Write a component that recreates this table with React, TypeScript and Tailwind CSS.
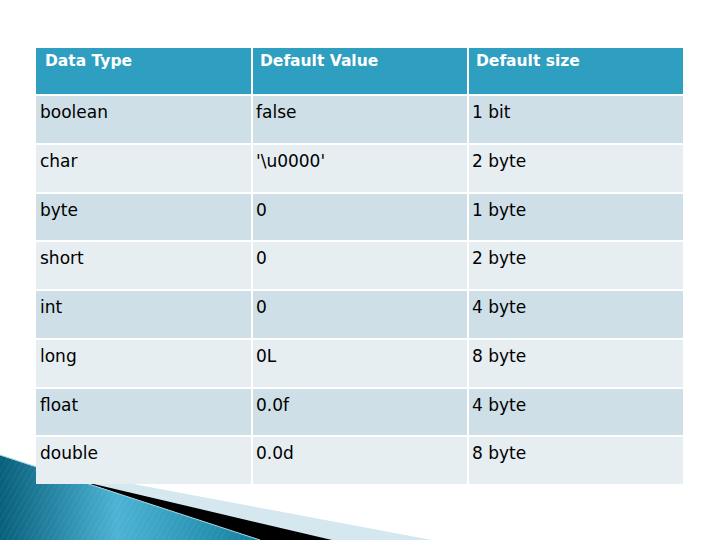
const ROWS = [
    ["boolean", "false", "1 bit"],
    ["char", "'\\u0000'", "2 byte"],
    ["byte", "0", "1 byte"],
    ["short", "0", "2 byte"],
    ["int", "0", "4 byte"],
    ["long", "0L", "8 byte"],
    ["float", "0.0f", "4 byte"],
    ["double", "0.0d", "8 byte"],
];

function Swoosh() {
    return (
        <svg
            className="absolute left-0 bottom-0"
            width="460"
            height="100"
            viewBox="0 440 460 100">
            <defs>
                <linearGradient id="blue" x1="0" y1="0" x2="1" y2="0">
                    <stop offset="0" stopColor="#075f7b" />
                    <stop offset="0.45" stopColor="#4db3d4" />
                    <stop offset="1" stopColor="#137f9e" />
                </linearGradient>
                <pattern
                    id="lines"
                    width="5"
                    height="5"
                    patternUnits="userSpaceOnUse"
                    patternTransform="rotate(30)">
                    <line x1="0" y1="0" x2="0" y2="5" stroke="#ffffff" strokeOpacity="0.12" strokeWidth="1" />
                </pattern>
            </defs>
            <polygon points="0,459 432,540 0,540" fill="#d6e8ef" />
            <polygon points="0,462 332,540 0,540" fill="#000000" />
            <polygon points="0,455 260,540 0,540" fill="url(#blue)" />
            <polygon points="0,455 260,540 0,540" fill="url(#lines)" />
            <line x1="0" y1="455" x2="260" y2="540" stroke="#a9dbe9" strokeWidth="1" />
        </svg>
    );
}

export default function App() {
    return (
        <div
            className="relative w-[720px] h-[540px] bg-white overflow-hidden"
            style={{ fontFamily: '"DejaVu Sans", Verdana, sans-serif' }}>
            <Swoosh />
            <div className="relative pt-[48px] pl-[36px]">
                <div className="grid grid-cols-[215px_214px_214px] gap-[2px] bg-white w-[647px]">
                    <div className="h-[46px] bg-[#2e9fc0] text-white font-bold text-[15.5px] leading-[18px] pt-[4px] pl-[9px]">
                        Data Type
                    </div>
                    <div className="h-[46px] bg-[#2e9fc0] text-white font-bold text-[15.5px] leading-[18px] pt-[4px] pl-[7px]">
                        Default Value
                    </div>
                    <div className="h-[46px] bg-[#2e9fc0] text-white font-bold text-[15.5px] leading-[18px] pt-[4px] pl-[7px]">
                        Default size
                    </div>
                    {ROWS.map((row, i) =>
                        row.map((cell, j) => (
                            <div
                                key={`${i}-${j}`}
                                className={`h-[46.75px] text-[17px] leading-[20px] text-black pt-[6px] ${
                                    j === 0 ? "pl-[4px]" : "pl-[3px]"
                                } ${i % 2 === 0 ? "bg-[#cedfe7]" : "bg-[#e7eef2]"}`}>
                                {cell}
                            </div>
                        ))
                    )}
                </div>
            </div>
        </div>
    );
}
